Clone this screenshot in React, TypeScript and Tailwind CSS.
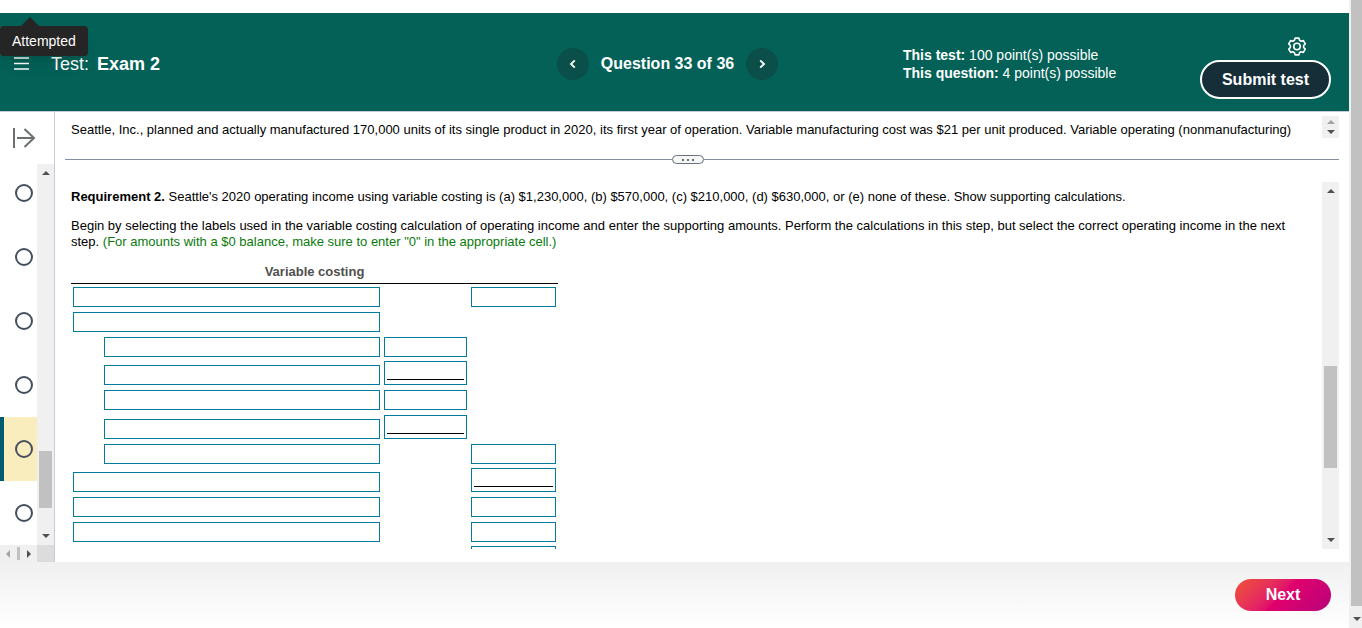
import { clsx } from 'clsx';

type Row = { indent?: boolean; sub?: boolean; total?: boolean; underline?: boolean; height: string };

const rows: Row[] = [
  { total: true, height: 'h-[25px]' },
  { height: 'h-[25px]' },
  { indent: true, sub: true, height: 'h-[25px]' },
  { indent: true, sub: true, underline: true, height: 'h-[28px]' },
  { indent: true, sub: true, height: 'h-[25px]' },
  { indent: true, sub: true, underline: true, height: 'h-[29px]' },
  { indent: true, total: true, height: 'h-[25px]' },
  { total: true, underline: true, height: 'h-[28px]' },
  { total: true, height: 'h-[25px]' },
  { total: true, height: 'h-[25px]' },
  { total: true, underline: true, height: 'h-[28px]' },
];

const questions = [29, 30, 31, 32, 33, 34];

function Arrow({ dir, muted }: { dir: 'up' | 'down' | 'left' | 'right'; muted?: boolean }) {
  const points = {
    up: '4,2 8,6 0,6',
    down: '0,2 8,2 4,6',
    left: '2,4 6,0 6,8',
    right: '2,0 6,4 2,8',
  };
  return (
    <svg width="8" height="8" viewBox="0 0 8 8" className="block shrink-0" aria-hidden="true">
      <polygon points={points[dir]} fill={muted ? '#a3a3a3' : '#505050'} />
    </svg>
  );
}

function AmountInput({ name, underline }: { name: string; underline?: boolean }) {
  if (underline) {
    return (
      <div className="h-6 border border-[#047a9c] px-0.5">
        <input aria-label={name} className="block h-[18px] w-full border-b border-black px-1 text-right outline-none" />
      </div>
    );
  }
  return <input aria-label={name} className="block h-5 w-full border border-[#047a9c] px-1 text-right outline-none" />;
}

function Header() {
  return (
    <header className="relative grid h-[98px] shrink-0 grid-cols-[557fr_346fr_446fr] bg-[#036157] text-white">
      <div className="flex items-center pt-1 pl-3.5">
        <button aria-label="Menu" className="mr-[22px]">
          <svg width="15" height="14" viewBox="0 0 15 14" className="block" stroke="#fff" strokeWidth="1.5">
            <path d="M0 1h15M0 6.5h15M0 12h15" />
          </svg>
        </button>
        <h1 className="flex gap-2 text-lg leading-6">
          Test: <b>Exam 2</b>
        </h1>
      </div>
      <div className="flex items-center pt-1">
        <button aria-label="Previous question" className="flex h-8 w-8 items-center justify-center rounded-full bg-[#0b4f4b]">
          <svg width="8" height="8" viewBox="0 0 8 8" fill="none" stroke="#fff" strokeWidth="1.8">
            <path d="M5.8 0.4L2 4L5.8 7.6" />
          </svg>
        </button>
        <span className="w-[157px] text-center text-base font-bold">Question 33 of 36</span>
        <button aria-label="Next question" className="flex h-8 w-8 items-center justify-center rounded-full bg-[#0b4f4b]">
          <svg width="8" height="8" viewBox="0 0 8 8" fill="none" stroke="#fff" strokeWidth="1.8">
            <path d="M2.2 0.4L6 4L2.2 7.6" />
          </svg>
        </button>
      </div>
      <div className="flex justify-between pr-[18px]">
        <div className="pt-[33px] text-sm leading-[18px]">
          <p>
            <b>This test:</b> 100 point(s) possible
          </p>
          <p>
            <b>This question:</b> 4 point(s) possible
          </p>
        </div>
        <div className="flex flex-col items-end gap-1 pt-6">
          <button aria-label="Settings" className="mr-6">
            <svg width="20" height="19" viewBox="0 0 20 20" className="block" fill="none" stroke="#fff" strokeWidth="1.7">
              <path
                strokeLinejoin="round"
                d="M8 1.2h4l.7 2.3 1.6.9 2.4-.6 2 3.4L17 9v2l1.7 1.8-2 3.4-2.4-.6-1.6.9-.7 2.3H8l-.7-2.3-1.6-.9-2.4.6-2-3.4L3 11V9L1.3 7.2l2-3.4 2.4.6 1.6-.9z"
              />
              <circle cx="10" cy="10" r="3.4" />
            </svg>
          </button>
          <button className="h-[39px] w-[131px] rounded-full border-2 border-white bg-[#152e38] text-base font-bold">Submit test</button>
        </div>
      </div>
      <div role="tooltip" className="absolute top-[13px] left-0 z-10 rounded bg-[#252525] px-3 py-[5px] text-sm shadow-lg">
        <svg width="20" height="10" viewBox="0 0 20 10" className="absolute -top-[9px] left-5">
          <path d="M0 10L10 0L20 10z" fill="#252525" />
        </svg>
        Attempted
      </div>
    </header>
  );
}

function Sidebar() {
  return (
    <nav className="flex w-[55px] shrink-0 flex-col border-r border-[#c7cbd8]">
      <div className="h-[52px] shrink-0 pt-4 pl-3">
        <button aria-label="Expand question list">
          <svg width="24" height="20" viewBox="0 0 24 20" className="block" fill="none" stroke="#6a7070" strokeWidth="2">
            <path d="M2 0v20M5 10h17M12.5 1L22 10L12.5 19" />
          </svg>
        </button>
      </div>
      <div className="flex min-h-0 flex-1">
        <ul className="-mt-[3px] min-h-0 flex-1 overflow-hidden">
          {questions.map((q) => (
            <li key={q} className={clsx('h-16 border-l-4', q === 33 ? 'border-[#005a70] bg-[#f9edbe]' : 'border-transparent')}>
              <button aria-label={`Question ${q}`} className="flex h-full w-full items-center pl-[11px]">
                <span className="h-[18px] w-[18px] shrink-0 rounded-full border-2 border-[#45505f]" />
              </button>
            </li>
          ))}
        </ul>
        <div className="flex w-[17px] flex-col items-center bg-[#f0f0f0] py-[5px]">
          <Arrow dir="up" />
          <div className="flex-[274]" />
          <div className="w-[13px] flex-[57] bg-[#c1c1c1]" />
          <div className="flex-[24]" />
          <Arrow dir="down" />
        </div>
      </div>
      <div className="flex h-[17px] shrink-0">
        <div className="flex flex-1 items-center justify-between bg-[#f0f0f0] px-1">
          <Arrow dir="left" muted />
          <div className="h-[13px] w-[3px] bg-[#c1c1c1]" />
          <Arrow dir="right" />
        </div>
        <div className="w-[17px] bg-[#dcdcdc]" />
      </div>
    </nav>
  );
}

function CostingTable() {
  return (
    <table className="w-[487px] table-fixed border-collapse">
      <colgroup>
        <col className="w-[311px]" />
        <col className="w-[87px]" />
        <col className="w-[89px]" />
      </colgroup>
      <thead>
        <tr>
          <th colSpan={3} className="h-[22px] p-0 align-middle leading-4 font-bold text-[#505050]">
            Variable costing
          </th>
        </tr>
        <tr>
          <td colSpan={3} className="h-px bg-black p-0" />
        </tr>
      </thead>
      <tbody>
        {rows.map((row, i) => (
          <tr key={i} className={row.height}>
            <td className={clsx('p-0.5 align-bottom', row.indent && 'pl-[33px]')}>
              <input aria-label={`Label ${i + 1}`} className="block h-5 w-full border border-[#047a9c] px-1 outline-none" />
            </td>
            <td className="p-0.5 align-bottom">{row.sub && <AmountInput name={`Amount ${i + 1}`} underline={row.underline} />}</td>
            <td className="p-0.5 align-bottom">{row.total && <AmountInput name={`Total ${i + 1}`} underline={row.underline} />}</td>
          </tr>
        ))}
      </tbody>
    </table>
  );
}

export default function App() {
  return (
    <div className="flex h-screen bg-white font-['Liberation_Sans',Arial,sans-serif] text-[13px] text-black">
      <div className="flex min-w-0 flex-1 flex-col pt-[13px]">
        <Header />
        <div className="flex min-h-0 flex-1 border-t border-[#c7cbd8]">
          <Sidebar />
          <main className="flex min-w-0 flex-1 flex-col pr-2.5 pb-[13px] pl-2.5">
            <div className="flex h-[43px] shrink-0 items-start justify-between pt-1">
              <p className="h-7 flex-1 overflow-hidden pt-1.5 pl-1.5 leading-4">
                Seattle, Inc., planned and actually manufactured 170,000 units of its single product in 2020, its first year of operation. Variable
                manufacturing cost was $21 per unit produced. Variable operating (nonmanufacturing)
              </p>
              <div className="flex h-[22px] w-[17px] flex-col items-center justify-between bg-[#f0f0f0] py-0.5">
                <Arrow dir="up" muted />
                <Arrow dir="down" />
              </div>
            </div>
            <div className="flex h-[9px] shrink-0 items-center">
              <div className="h-px flex-[607] bg-[#868ea6]" />
              <button aria-label="Resize panes" className="flex h-[9px] w-8 items-center justify-center gap-[3px] rounded-full border border-[#6a7080] bg-[#f5f7f7]">
                <span className="h-0.5 w-0.5 bg-[#6a7070]" />
                <span className="h-0.5 w-0.5 bg-[#6a7070]" />
                <span className="h-0.5 w-0.5 bg-[#6a7070]" />
              </button>
              <div className="h-px flex-[635] bg-[#868ea6]" />
            </div>
            <div className="mt-[18px] flex min-h-0 flex-1">
              <div className="min-w-0 flex-1 overflow-hidden pt-[7px] pr-6 pl-1.5 leading-4">
                <p>
                  <b>Requirement 2.</b> Seattle's 2020 operating income using variable costing is (a) $1,230,000, (b) $570,000, (c) $210,000, (d)
                  $630,000, or (e) none of these. Show supporting calculations.
                </p>
                <p className="mt-[13px] mb-[11px]">
                  Begin by selecting the labels used in the variable costing calculation of operating income and enter the supporting amounts. Perform
                  the calculations in this step, but select the correct operating income in the next step.{' '}
                  <span className="text-[#0a7a0a]">(For amounts with a $0 balance, make sure to enter "0" in the appropriate cell.)</span>
                </p>
                <CostingTable />
              </div>
              <div className="flex w-[17px] flex-col items-center bg-[#f0f0f0] py-[5px]">
                <Arrow dir="up" />
                <div className="flex-[171]" />
                <div className="w-[13px] flex-[102] bg-[#c1c1c1]" />
                <div className="flex-[68]" />
                <Arrow dir="down" />
              </div>
            </div>
          </main>
        </div>
        <footer className="flex h-[66px] shrink-0 items-center justify-end bg-linear-to-b from-[#f0f0f0] to-white pr-[18px]">
          <button className="h-8 w-24 rounded-full bg-linear-135 from-[#f0502f] via-[#e0006d] to-[#b8007a] text-base font-bold text-white">
            Next
          </button>
        </footer>
      </div>
      <div className="flex w-[13px] flex-col items-end bg-[#f0f0f0]">
        <div className="w-[11px] flex-1 bg-[#c1c1c1]" />
        <div className="flex h-[22px] items-center pt-1 pr-px">
          <Arrow dir="down" />
        </div>
      </div>
    </div>
  );
}
